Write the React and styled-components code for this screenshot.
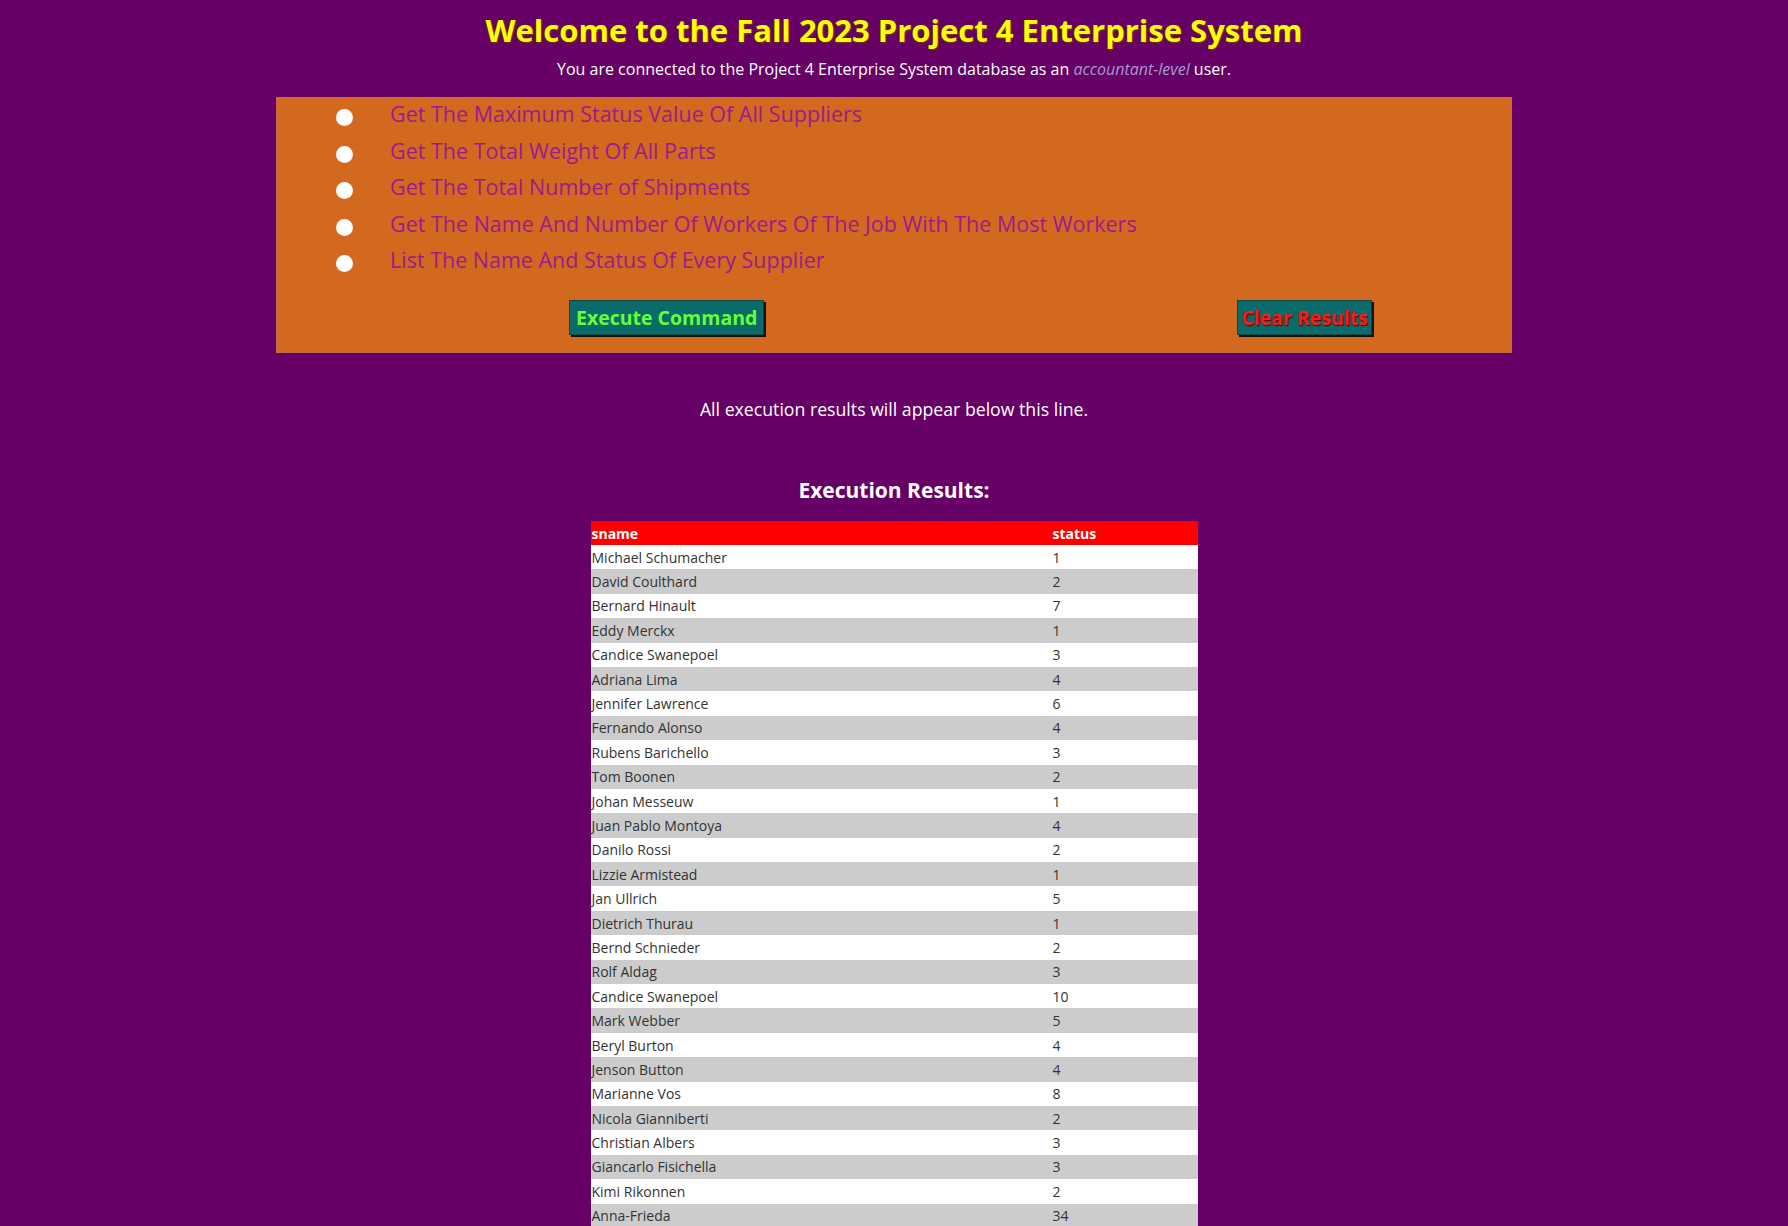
import React from 'react';
import styled, { createGlobalStyle } from 'styled-components';

const GlobalStyle = createGlobalStyle`
	body {
		margin: 8px;
		background-color: #660066;
		font-family: 'Open Sans', 'Noto Sans', sans-serif;
	}
`;

const Page = styled.div`
	display: flex;
	flex-direction: column;
	align-items: center;
`;

const Title = styled.h1`
	margin: 4px 0 0;
	font-size: 31px;
	line-height: 36px;
	font-weight: 700;
	color: #ffff00;
	text-shadow: 1px 1px 2px #7a3a00;
`;

const Subtitle = styled.p`
	margin: 11px 0 0;
	font-size: 16px;
	line-height: 20px;
	color: #ffffff;

	span {
		font-style: italic;
		color: #a39bd0;
	}
`;

const CommandBox = styled.div`
	box-sizing: border-box;
	width: 1236px;
	height: 256px;
	margin-top: 18px;
	background-color: #d2691e;
	border: 1px solid #c46a4a;
	padding: 1px 0 0 59px;
	display: flex;
	flex-direction: column;
`;

const Option = styled.label`
	display: flex;
	align-items: flex-start;
	height: 36.5px;
	font-size: 21.5px;
	line-height: 30px;
	color: #9e1a8e;

	input {
		appearance: none;
		flex: none;
		width: 17px;
		height: 17px;
		margin: 10px 37px 0 0;
		border-radius: 50%;
		background-color: #ffffff;
		border: 0;
	}
`;

const ButtonRow = styled.div`
	display: flex;
	justify-content: space-between;
	padding: 18px 139px 0 233px;
`;

const Button = styled.button`
	height: 35px;
	padding: 0 ${(p) => p.$pad}px;
	background-color: #0b6b6b;
	border: 1px solid #0b4a4a;
	box-shadow: 2px 2px 0 #111111;
	font-family: 'Open Sans', 'Noto Sans', sans-serif;
	font-size: 19.5px;
	font-weight: 700;
	color: ${(p) => p.$color};
	text-shadow: ${(p) => (p.$shadow ? '1px 1px 1px #550000' : 'none')};
	cursor: pointer;
`;

const Notice = styled.p`
	margin: 45px 0 0;
	font-size: 17.7px;
	line-height: 22px;
	color: #ffffff;
`;

const ResultsTitle = styled.h2`
	margin: 55px 0 0;
	font-size: 21px;
	line-height: 30px;
	font-weight: 700;
	color: #ffffff;
`;

const Table = styled.table`
	width: 607px;
	margin-top: 16px;
	border-collapse: collapse;
	font-size: 14px;

	th {
		background-color: #ff0000;
		color: #ffffff;
		font-weight: 700;
		text-align: left;
		padding: 0 1px;
		height: 24px;
	}

	td {
		color: #333333;
		padding: 0 1px;
		height: 24.4px;
	}

	tbody tr:nth-child(even) td {
		background-color: #cccccc;
	}

	tbody tr:nth-child(odd) td {
		background-color: #ffffff;
	}

	.status {
		width: 144px;
	}
`;

const options = [
	'Get The Maximum Status Value Of All Suppliers',
	'Get The Total Weight Of All Parts',
	'Get The Total Number of Shipments',
	'Get The Name And Number Of Workers Of The Job With The Most Workers',
	'List The Name And Status Of Every Supplier',
];

const rows = [
	['Michael Schumacher', 1],
	['David Coulthard', 2],
	['Bernard Hinault', 7],
	['Eddy Merckx', 1],
	['Candice Swanepoel', 3],
	['Adriana Lima', 4],
	['Jennifer Lawrence', 6],
	['Fernando Alonso', 4],
	['Rubens Barichello', 3],
	['Tom Boonen', 2],
	['Johan Messeuw', 1],
	['Juan Pablo Montoya', 4],
	['Danilo Rossi', 2],
	['Lizzie Armistead', 1],
	['Jan Ullrich', 5],
	['Dietrich Thurau', 1],
	['Bernd Schnieder', 2],
	['Rolf Aldag', 3],
	['Candice Swanepoel', 10],
	['Mark Webber', 5],
	['Beryl Burton', 4],
	['Jenson Button', 4],
	['Marianne Vos', 8],
	['Nicola Gianniberti', 2],
	['Christian Albers', 3],
	['Giancarlo Fisichella', 3],
	['Kimi Rikonnen', 2],
	['Anna-Frieda', 34],
];

const App = () => {
	return (
		<>
			<GlobalStyle />
			<Page>
				<Title>Welcome to the Fall 2023 Project 4 Enterprise System</Title>
				<Subtitle>
					You are connected to the Project 4 Enterprise System database as an{' '}
					<span>accountant-level</span> user.
				</Subtitle>
				<CommandBox>
					{options.map((text) => (
						<Option key={text}>
							<input type='radio' name='command' />
							{text}
						</Option>
					))}
					<ButtonRow>
						<Button $color='#66ff33' $pad={6}>
							Execute Command
						</Button>
						<Button $color='#ff1a1a' $pad={3} $shadow>
							Clear Results
						</Button>
					</ButtonRow>
				</CommandBox>
				<Notice>All execution results will appear below this line.</Notice>
				<ResultsTitle>Execution Results:</ResultsTitle>
				<Table>
					<thead>
						<tr>
							<th>sname</th>
							<th className='status'>status</th>
						</tr>
					</thead>
					<tbody>
						{rows.map(([name, status], i) => (
							<tr key={i}>
								<td>{name}</td>
								<td className='status'>{status}</td>
							</tr>
						))}
					</tbody>
				</Table>
			</Page>
		</>
	);
};

export default App;
